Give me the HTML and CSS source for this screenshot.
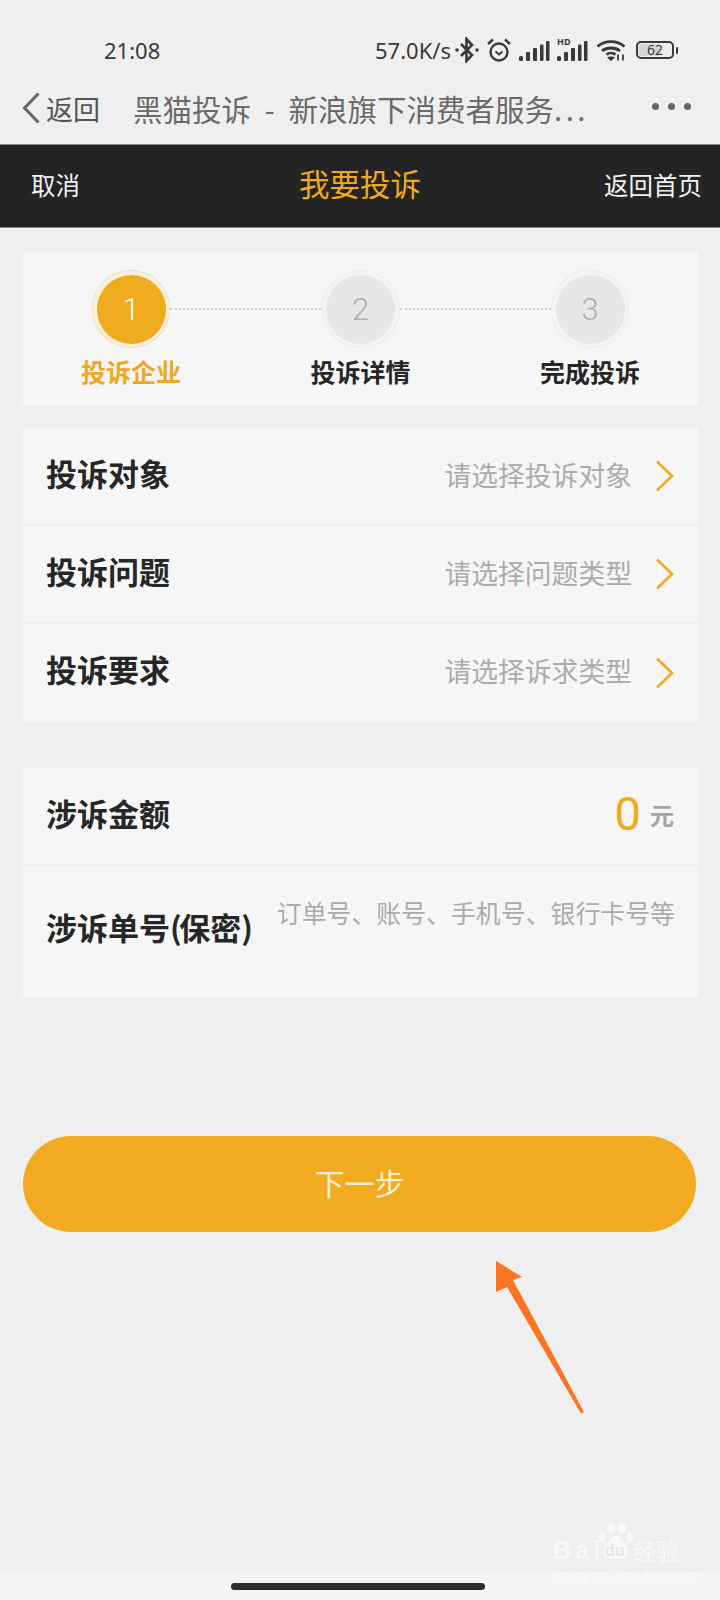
FILE: index.html
```html
<!DOCTYPE html>
<html lang="zh-CN">
<head>
<meta charset="utf-8">
<title>我要投诉</title>
<link rel="stylesheet" href="styles.css">
</head>
<body>
<div class="page">
  <div class="status">
    <span class="time">21:08</span>
    <div class="status-right">
      <span class="speed">57.0K/s</span>
      <svg class="ic-bt" viewBox="0 0 24 26" width="24" height="26"><path d="M6 7l11 11-5.500 6V2L17 8 6 19" fill="none" stroke="#3a3a3a" stroke-width="2.600"/><circle cx="2" cy="13" r="1.800" fill="#3a3a3a"/><circle cx="22" cy="13" r="1.800" fill="#3a3a3a"/></svg>
      <svg class="ic-alarm" viewBox="0 0 24 24" width="24" height="24"><circle cx="12" cy="14" r="8.500" fill="none" stroke="#3a3a3a" stroke-width="2.400"/><path d="M8.500 13.500l3.500 3 3.500-3" fill="none" stroke="#3a3a3a" stroke-width="2"/><path d="M1 6l5-4.500M23 6l-5-4.500" stroke="#3a3a3a" stroke-width="2.400"/></svg>
      <svg class="ic-sig" viewBox="0 0 31 20" width="31" height="20"><g fill="#3a3a3a"><rect x="0" y="15" width="4" height="5" rx="1.500"/><rect x="7" y="11" width="4" height="9" rx="1"/><rect x="14" y="7" width="4" height="13" rx="1"/><rect x="21" y="3.500" width="3.500" height="16.500" rx="1"/><rect x="27" y="0" width="3.500" height="20" rx="1"/></g></svg>
      <span class="sig-hd">
        <svg viewBox="0 0 31 20" width="31" height="20"><g fill="#3a3a3a"><rect x="0" y="15" width="4" height="5" rx="1.500"/><rect x="7" y="11" width="4" height="9" rx="1"/><rect x="14" y="7" width="4" height="13" rx="1"/><rect x="21" y="3.500" width="3.500" height="16.500" rx="1"/><rect x="27" y="0" width="3.500" height="20" rx="1"/></g></svg>
        <span class="hd">HD</span>
      </span>
      <svg class="ic-wifi" viewBox="0 0 30 22" width="30" height="22"><g fill="none" stroke="#3a3a3a" stroke-width="2.800"><path d="M1.500 7.500C9 1 21 1 28.500 7.500"/><path d="M6 12c5-4 13-4 18 0"/><path d="M10.500 15.500c2.500-1.800 6.500-1.800 9 0"/></g><path d="M15 22l-4-3.500c2-1.500 6-1.500 8 0z" fill="#3a3a3a"/><path d="M22 15.500v6M27 15.500v6" stroke="#3a3a3a" stroke-width="1.800"/></svg>
      <span class="battery"><span class="bat-body"><span class="bat-fill"></span><span class="bat-num">62</span></span><span class="bat-tip"></span></span>
    </div>
  </div>

  <div class="nav">
    <svg class="nav-back" viewBox="0 0 18 32" width="18" height="32"><path d="M16.500 1.500L2.500 16l14 14.500" fill="none" stroke="#666" stroke-width="3"/></svg>
    <span class="nav-return">返回</span>
    <span class="nav-title">黑猫投诉 - 新浪旗下消费者服务<span class="nav-ellipsis">...</span></span>
    <span class="nav-more"><i></i><i></i><i></i></span>
  </div>

  <div class="bar">
    <span class="bar-side">取消</span>
    <span class="bar-title">我要投诉</span>
    <span class="bar-side">返回首页</span>
  </div>

  <main class="content">
    <section class="card steps">
      <div class="step step-on step-link">
        <div class="ring"><div class="dot">1</div></div>
        <div class="step-label">投诉企业</div>
      </div>
      <div class="step step-link">
        <div class="ring"><div class="dot">2</div></div>
        <div class="step-label">投诉详情</div>
      </div>
      <div class="step">
        <div class="ring"><div class="dot">3</div></div>
        <div class="step-label">完成投诉</div>
      </div>
    </section>

    <section class="card group-select">
      <div class="row">
        <span class="row-label">投诉对象</span>
        <span class="row-value">请选择投诉对象</span>
        <svg class="chev" viewBox="0 0 19 32" width="19" height="32"><path d="M2 1.500L17 16 2 30.500" fill="none" stroke="#f0aa1e" stroke-width="2.600"/></svg>
      </div>
      <div class="row">
        <span class="row-label">投诉问题</span>
        <span class="row-value">请选择问题类型</span>
        <svg class="chev" viewBox="0 0 19 32" width="19" height="32"><path d="M2 1.500L17 16 2 30.500" fill="none" stroke="#f0aa1e" stroke-width="2.600"/></svg>
      </div>
      <div class="row row-last">
        <span class="row-label">投诉要求</span>
        <span class="row-value">请选择诉求类型</span>
        <svg class="chev" viewBox="0 0 19 32" width="19" height="32"><path d="M2 1.500L17 16 2 30.500" fill="none" stroke="#f0aa1e" stroke-width="2.600"/></svg>
      </div>
    </section>

    <section class="card group-amount">
      <div class="row">
        <span class="row-label">涉诉金额</span>
        <span class="amount">0</span>
        <span class="unit">元</span>
      </div>
      <div class="row row-last row-order">
        <span class="row-label">涉诉单号<span class="paren">(</span>保密<span class="paren">)</span></span>
        <span class="order-hint">订单号、账号、手机号、银行卡号等</span>
      </div>
    </section>

    <button class="next" type="button"><span class="next-text">下一步</span></button>
  </main>

  <footer class="home"><span class="home-bar"></span></footer>

  <svg class="arrow" viewBox="0 0 100 160" width="100" height="160"><path d="M6 1L32 17 23 20 94 152 91 153.500 17 27 6 32z" fill="#fb7424"/></svg>

  <div class="mark">
    <div class="mark-top">
      <span class="mark-bai">Bai</span>
      <span class="mark-paw">
        <svg viewBox="0 0 36 40" width="36" height="40"><g fill="#f9f9f9"><ellipse cx="4.500" cy="15" rx="3.500" ry="5"/><ellipse cx="13" cy="6" rx="4" ry="5.500"/><ellipse cx="24" cy="6" rx="4" ry="5.500"/><ellipse cx="32" cy="15" rx="3.500" ry="5"/><path d="M18 14c-5 0-6 5-10 9-4 5-2 14 5 14 2.500 0 3-1 5-1s3 1 5 1c7 0 9-9 5-14-4-4-5-9-10-9z"/></g></svg>
        <span class="mark-du">du</span>
      </span>
      <span class="mark-cn">经验</span>
    </div>
    <div class="mark-url">jingyan.baidu.com</div>
  </div>
</div>
</body>
</html>
```

FILE: styles.css
```css
* { box-sizing: border-box; }
html, body { margin: 0; padding: 0; }
body { font-family: "Noto Sans CJK SC", "Noto Sans", sans-serif; background: #efefef; color: #2a2a2a; }
.page { position: relative; width: 720px; height: 1600px; overflow: hidden; display: flex; flex-direction: column; background: #efefef; }

.status { height: 72px; padding: 28px 42px 0 104px; display: flex; justify-content: space-between; align-items: center; color: #3a3a3a; }
.time { font-family: "Noto Sans", sans-serif; font-size: 22px; line-height: 44px; }
.status-right { display: flex; align-items: center; height: 44px; }
.speed { font-family: "Noto Sans", sans-serif; font-size: 22px; width: 79px; white-space: nowrap; }
.ic-bt { margin-left: 1px; }
.ic-alarm { margin-left: 8px; }
.ic-sig { margin-left: 8px; margin-top: 2px; }
.sig-hd { position: relative; display: block; margin-left: 7px; margin-top: 2px; height: 20px; }
.sig-hd svg { display: block; }
.hd { position: absolute; left: 0; top: -4px; font-family: "Noto Sans", sans-serif; font-weight: 700; font-size: 9px; line-height: 10px; background: #efefef; padding-right: 2px; }
.ic-wifi { margin-left: 8px; }
.battery { display: flex; align-items: center; margin-left: 10px; }
.bat-body { position: relative; width: 38px; height: 18px; border: 2px solid #3a3a3a; border-radius: 5px; display: flex; align-items: center; justify-content: center; overflow: hidden; }
.bat-fill { position: absolute; left: 1px; top: 1px; bottom: 1px; width: 21px; background: #d5d5d5; border-radius: 2px; }
.bat-num { position: relative; font-family: "Noto Sans", sans-serif; font-size: 14px; line-height: 14px; }
.bat-tip { width: 2px; height: 7px; margin-left: 2px; background: #3a3a3a; border-radius: 1px; }

.nav { height: 72px; padding: 0 29px 0 22px; display: flex; align-items: center; color: #666; }
.nav-back { flex: none; }
.nav-return { font-size: 27px; margin-left: 6px; width: 87px; color: #555; white-space: nowrap; }
.nav-title { font-size: 29.500px; word-spacing: 7px; color: #6a6a6a; white-space: nowrap; flex: 1; }
.nav-ellipsis { letter-spacing: 3.500px; }
.nav-more { display: flex; gap: 9px; margin-top: -4px; }
.nav-more i { display: block; width: 7px; height: 7px; border-radius: 50%; background: #666; }

.bar { height: 84px; background: #242424; border-top: 1px solid #8a8a8a; border-bottom: 1px solid #8a8a8a; padding: 0 18px 4px 31px; display: flex; justify-content: space-between; align-items: center; position: relative; }
.bar-side { font-size: 24.500px; color: #f2f2f2; }
.bar-title { position: absolute; left: 0; right: 0; top: 15px; text-align: center; font-size: 30.500px; line-height: 46px; color: #f0aa1e; }

.content { flex: 1; padding: 24px 22px 0 23px; display: flex; flex-direction: column; }
.card { background: #f6f6f6; width: 675px; }

.steps { height: 153px; padding: 18px 0 0 28px; display: flex; gap: 69.500px; }
.step { position: relative; width: 160px; display: flex; flex-direction: column; align-items: center; }
.step-link::after { content: ""; position: absolute; left: 119px; top: 38px; width: 151px; border-top: 2px dotted #cfcfcf; }
.ring { width: 78px; height: 78px; border-radius: 50%; border: 1px dotted #e2e2e2; display: flex; align-items: center; justify-content: center; background: #f4f4f4; }
.dot { width: 69px; height: 69px; border-radius: 50%; background: #e7e7e7; color: #aeaeae; font-family: Roboto, sans-serif; font-weight: 300; font-size: 31px; display: flex; align-items: center; justify-content: center; }
.step-label { margin-top: 8px; font-size: 25px; line-height: 30px; font-weight: 700; color: #262626; white-space: nowrap; }
.step-on .ring { background: #f8f0dc; border-color: #e9c988; }
.step-on .dot { background: #f0aa1e; color: #fff; }
.step-on .step-label { color: #eea81f; }

.group-select { margin-top: 23px; }
.group-amount { margin-top: 47px; }
.row { height: 98px; padding: 0 24px 0 23px; display: flex; align-items: center; border-bottom: 2px solid #f0f0f0; }
.row-last { height: 97px; border-bottom: 0; }
.row-label { font-size: 31px; font-weight: 700; color: #262626; white-space: nowrap; flex: 1; margin-bottom: 8px; }
.paren { letter-spacing: -2.500px; }
.row-value { font-size: 26.800px; color: #ababab; white-space: nowrap; margin-bottom: 4px; }
.chev { flex: none; margin-left: 23px; }
.amount { font-family: Roboto, sans-serif; font-size: 47px; line-height: 60px; color: #f0aa1e; margin-bottom: 4px; }
.unit { font-size: 24px; font-weight: 700; color: #a5a5a5; margin-left: 9px; margin-bottom: 4px; }
.row-order { height: 131px; align-items: flex-start; padding-top: 28px; }
.row-order .row-label { margin-top: 10px; margin-bottom: 0; flex: none; }
.order-hint { margin-left: auto; margin-right: -1px; font-size: 24.900px; line-height: 36px; color: #ababab; white-space: nowrap; }

.next { margin-top: 139px; width: 673px; height: 96px; padding: 0 0 4px; border: 0; border-radius: 48px; background: #f1ab20; color: #f9efd9; font: 30px "Noto Sans CJK SC", sans-serif; }

.home { height: 28px; background: #f5f5f5; display: flex; justify-content: center; padding-top: 11px; }
.home-bar { width: 254px; height: 7px; margin-left: -4px; border-radius: 4px; background: #2e2e2e; }

.arrow { position: absolute; left: 490px; top: 1260px; }

.mark { position: absolute; left: 553px; top: 1520px; width: 130px; }
.mark-top { display: flex; align-items: flex-end; height: 42px; color: #f9f9f9; }
.mark-bai { font-family: "Liberation Sans", sans-serif; font-weight: 700; font-size: 25px; line-height: 24px; letter-spacing: 4px; white-space: nowrap; }
.mark-paw { position: relative; display: block; flex: none; width: 36px; height: 40px; margin-left: -6px; }
.mark-paw svg { display: block; }
.mark-du { position: absolute; left: 7px; bottom: 3px; font-family: "Liberation Sans", sans-serif; font-weight: 700; font-size: 16px; line-height: 16px; color: #e6e6e6; }
.mark-cn { font-size: 23px; line-height: 24px; margin-left: -1px; white-space: nowrap; }
.mark-url { margin-top: 7px; font-family: "Liberation Sans", sans-serif; font-size: 16px; line-height: 16px; letter-spacing: 1px; color: #f9f9f9; white-space: nowrap; }
```
